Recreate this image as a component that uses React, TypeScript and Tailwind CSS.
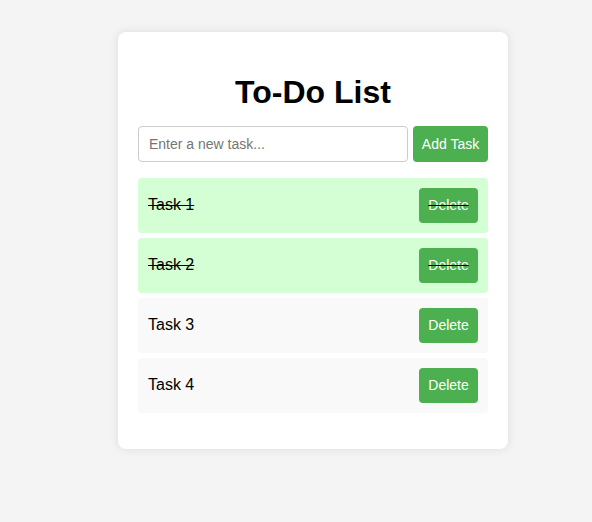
import { useState } from "react";

type Task = { id: number; text: string; done: boolean };

const initialTasks: Task[] = [
  { id: 1, text: "Task 1", done: true },
  { id: 2, text: "Task 2", done: true },
  { id: 3, text: "Task 3", done: false },
  { id: 4, text: "Task 4", done: false },
];

const App = () => {
  const [tasks, setTasks] = useState<Task[]>(initialTasks);
  const [input, setInput] = useState("");

  const addTask = () => {
    if (!input.trim()) return;
    setTasks([...tasks, { id: Date.now(), text: input.trim(), done: false }]);
    setInput("");
  };

  const toggle = (id: number) =>
    setTasks(tasks.map(t => (t.id === id ? { ...t, done: !t.done } : t)));

  const remove = (id: number) => setTasks(tasks.filter(t => t.id !== id));

  return (
    <div className="min-h-screen bg-[#f4f4f4] pt-[32px] font-['Liberation_Sans',Arial,sans-serif] text-black">
      <div className="ml-[118px] w-[390px] rounded-[8px] bg-white p-[20px] shadow-[0_0_10px_rgba(0,0,0,0.1)]">
        <h1 className="mt-[21.5px] mb-[15.7px] text-center text-[32px] font-bold leading-[36.8px]">
          To-Do List
        </h1>
        <div className="flex gap-[5px]">
          <input
            value={input}
            onChange={e => setInput(e.target.value)}
            onKeyDown={e => e.key === "Enter" && addTask()}
            placeholder="Enter a new task..."
            className="h-[36px] flex-1 rounded-[4px] border border-[#ccc] px-[10px] pt-[1px] text-[14px] outline-none placeholder:text-[#757575]"
          />
          <button
            onClick={addTask}
            className="h-[36px] w-[75px] rounded-[4px] bg-[#4caf50] pt-[2px] text-[14px] text-white"
          >
            Add Task
          </button>
        </div>
        <ul className="mt-[16px] mb-[16px] flex flex-col gap-[5px]">
          {tasks.map(t => (
            <li
              key={t.id}
              onClick={() => toggle(t.id)}
              className={
                "flex h-[55px] items-center justify-between rounded-[4px] px-[10px] text-[16px] cursor-pointer " +
                (t.done ? "bg-[#d4ffd4] line-through" : "bg-[#f9f9f9]")
              }
            >
              <span>{t.text}</span>
              <button
                onClick={e => {
                  e.stopPropagation();
                  remove(t.id);
                }}
                className="h-[35px] w-[59px] rounded-[4px] bg-[#4caf50] pt-[1px] text-[14px] text-white"
              >
                Delete
              </button>
            </li>
          ))}
        </ul>
      </div>
    </div>
  );
};

export default App;
